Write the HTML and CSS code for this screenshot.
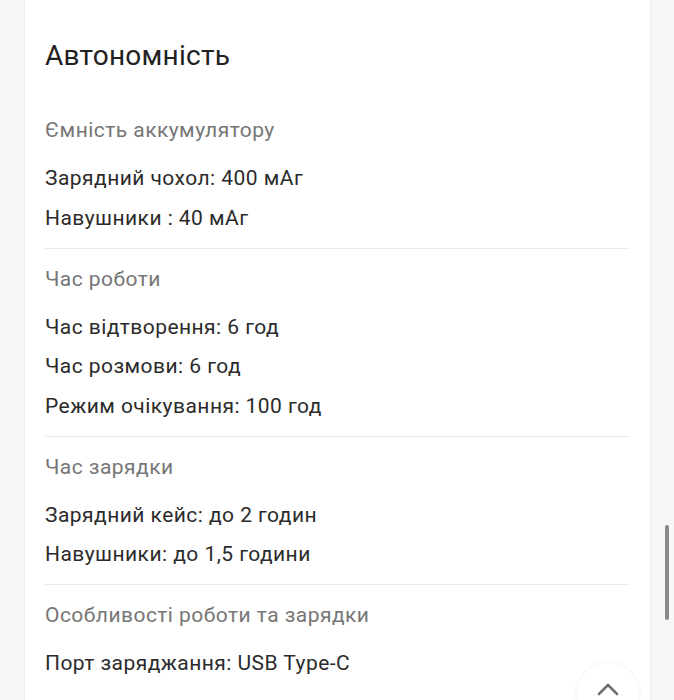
FILE: index.html
```html
<!DOCTYPE html>
<html lang="uk">
<head>
<meta charset="utf-8">
<title>Автономність</title>
<link rel="stylesheet" href="styles.css">
</head>
<body>
<main class="card">
  <h2 class="title">Автономність</h2>
  <section class="group">
    <div class="group-name">Ємність аккумулятору</div>
    <ul class="values">
      <li>Зарядний чохол: 400 мАг</li>
      <li>Навушники : 40 мАг</li>
    </ul>
  </section>
  <section class="group">
    <div class="group-name">Час роботи</div>
    <ul class="values">
      <li>Час відтворення: 6 год</li>
      <li>Час розмови: 6 год</li>
      <li>Режим очікування: 100 год</li>
    </ul>
  </section>
  <section class="group">
    <div class="group-name">Час зарядки</div>
    <ul class="values">
      <li>Зарядний кейс: до 2 годин</li>
      <li>Навушники: до 1,5 години</li>
    </ul>
  </section>
  <section class="group">
    <div class="group-name">Особливості роботи та зарядки</div>
    <ul class="values">
      <li>Порт заряджання: USB Type-C</li>
    </ul>
  </section>
</main>
<div class="scrollbar"></div>
<button class="to-top" aria-label="Вгору">
  <svg width="22" height="14" viewBox="0 0 22 14"><path d="M2 12 L11 3 L20 12" fill="none" stroke="#707070" stroke-width="2.6" stroke-linecap="round" stroke-linejoin="round"/></svg>
</button>
</body>
</html>
```
FILE: styles.css
```css
html, body {
  margin: 0;
  padding: 0;
  background: #f7f7f7;
  font-family: Roboto, "Noto Sans", "Liberation Sans", sans-serif;
  overflow: hidden;
}
.card {
  margin-left: 25px;
  width: 585px;
  min-height: 760px;
  background: #ffffff;
  padding: 40px 20px 0 20px;
  box-shadow: 0 0 3px rgba(0,0,0,0.08);
}
.title {
  margin: 0 0 28px 0;
  font-size: 28px;
  letter-spacing: 0.25px;
  line-height: 32px;
  font-weight: 400;
  color: #212121;
}
.group {
  padding: 18px 0 9.5px 0;
  border-bottom: 1px solid #ebebeb;
}
.group:last-child {
  border-bottom: none;
}
.group-name {
  font-size: 21px;
  letter-spacing: 0.45px;
  line-height: 24px;
  color: #767676;
}
.values {
  list-style: none;
  margin: 17px 0 0 0;
  padding: 0;
}
.values li {
  font-size: 21px;
  letter-spacing: 0.45px;
  line-height: 39.5px;
  color: #2b2b2b;
}
.scrollbar {
  position: fixed;
  left: 665px;
  top: 525px;
  width: 4px;
  height: 95px;
  border-radius: 2px;
  background: #8a8a8a;
}
.to-top {
  position: fixed;
  left: 577px;
  top: 663px;
  width: 62px;
  height: 62px;
  border-radius: 50%;
  border: none;
  background: #ffffff;
  box-shadow: 0 0 4px rgba(0,0,0,0.08);
  padding: 0;
  display: flex;
  align-items: flex-start;
  justify-content: center;
  padding-top: 19px;
}
```
